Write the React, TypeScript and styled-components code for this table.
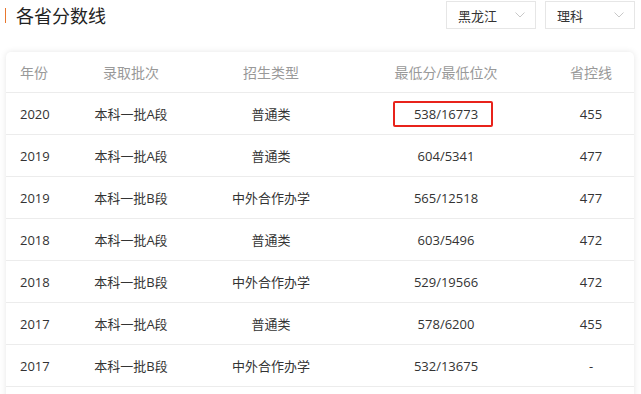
import styled, { createGlobalStyle } from "styled-components";

const GlobalStyle = createGlobalStyle`
  * { box-sizing: border-box; margin: 0; padding: 0; }
  body {
    background: #fff;
    font-family: "Open Sans", "Noto Sans CJK SC", sans-serif;
  }
`;

const Page = styled.div`
  width: 641px;
  height: 394px;
  overflow: hidden;
  padding: 1px 6px 0 5px;
`;

const TopBar = styled.div`
  display: flex;
  align-items: center;
  justify-content: space-between;
  height: 28px;
`;

const Title = styled.h2`
  display: flex;
  align-items: center;
  gap: 10px;
  font-size: 18px;
  font-weight: 400;
  color: #222;
  font-family: "Noto Sans CJK SC", sans-serif;
  line-height: 24px;

  &::before {
    content: "";
    display: block;
    width: 1px;
    height: 15px;
    background: #e8772e;
  }
`;

const Selects = styled.div`
  display: flex;
  gap: 9px;
`;

const Select = styled.div`
  display: flex;
  align-items: center;
  justify-content: space-between;
  width: 90px;
  height: 28px;
  padding: 0 10px 0 11px;
  border: 1px solid #e6e6e6;
  font-size: 13px;
  color: #333;
  font-family: "Noto Sans CJK SC", sans-serif;
`;

const Card = styled.div`
  margin: 23px 0 0 1px;
  width: 628px;
  padding-bottom: 30px;
  background: #fff;
  border-radius: 5px;
  box-shadow: 0 0 6px rgba(0, 0, 0, 0.1);
`;

const Row = styled.div<{ $head?: boolean }>`
  display: grid;
  grid-template-columns: 70px 110px 170px 180px 98px;
  align-items: center;
  height: ${(p) => (p.$head ? "41px" : "42px")};
  border-bottom: 1px solid #ececec;
  font-size: ${(p) => (p.$head ? "14px" : "13px")};
  color: ${(p) => (p.$head ? "#999" : "#333")};
`;

const Cell = styled.div<{ $left?: boolean; $shift?: boolean }>`
  text-align: ${(p) => (p.$left ? "left" : "center")};
  padding-left: ${(p) => (p.$left ? "14px" : p.$shift ? "12px" : "0")};
`;

const Marked = styled.span`
  display: inline-block;
  width: 100px;
  height: 26px;
  margin-left: -6px;
  padding-left: 6px;
  line-height: 22px;
  border: 2px solid #e8231b;
  border-radius: 2px;
`;

const Chevron = () => (
  <svg width="10" height="6" viewBox="0 0 10 6">
    <path d="M0.5 0.5 L5 5 L9.5 0.5" fill="none" stroke="#c8c8c8" strokeWidth="1" />
  </svg>
);

const rows = [
  ["2020", "本科一批A段", "普通类", "538/16773", "455"],
  ["2019", "本科一批A段", "普通类", "604/5341", "477"],
  ["2019", "本科一批B段", "中外合作办学", "565/12518", "477"],
  ["2018", "本科一批A段", "普通类", "603/5496", "472"],
  ["2018", "本科一批B段", "中外合作办学", "529/19566", "472"],
  ["2017", "本科一批A段", "普通类", "578/6200", "455"],
  ["2017", "本科一批B段", "中外合作办学", "532/13675", "-"],
];

export default function App() {
  return (
    <>
      <GlobalStyle />
      <Page>
        <TopBar>
          <Title>各省分数线</Title>
          <Selects>
            <Select>
              黑龙江
              <Chevron />
            </Select>
            <Select>
              理科
              <Chevron />
            </Select>
          </Selects>
        </TopBar>
        <Card>
          <Row $head>
            <Cell $left>年份</Cell>
            <Cell>录取批次</Cell>
            <Cell>招生类型</Cell>
            <Cell>最低分/最低位次</Cell>
            <Cell $shift>省控线</Cell>
          </Row>
          {rows.map((r, idx) => (
            <Row key={idx}>
              <Cell $left>{r[0]}</Cell>
              <Cell>{r[1]}</Cell>
              <Cell>{r[2]}</Cell>
              <Cell>{idx === 0 ? <Marked>{r[3]}</Marked> : r[3]}</Cell>
              <Cell $shift>{r[4]}</Cell>
            </Row>
          ))}
        </Card>
      </Page>
    </>
  );
}
